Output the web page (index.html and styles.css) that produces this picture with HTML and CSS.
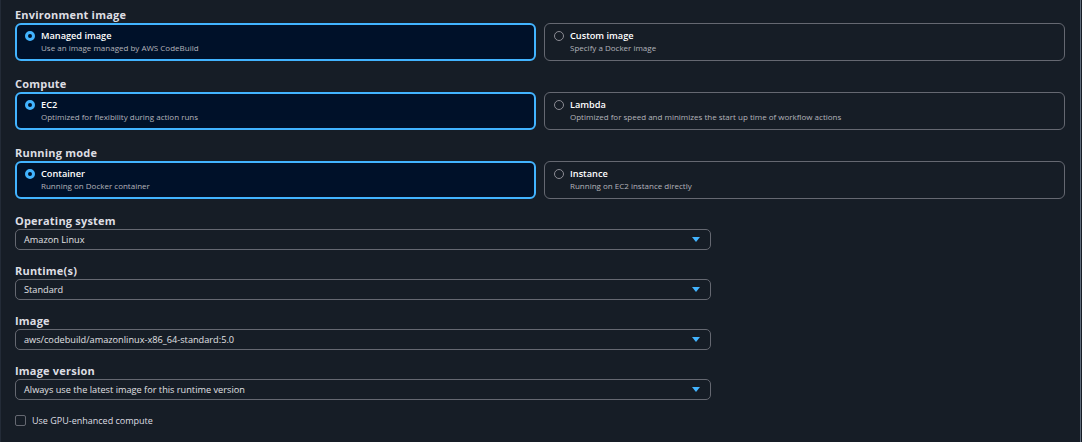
FILE: index.html
```html
<!DOCTYPE html>
<html lang="en">
<head>
    <meta charset="UTF-8">
    <title>Environment</title>
    <link rel="stylesheet" href="styles.css">
</head>
<body>
<div class="panel">

    <div class="group">
        <div class="label">Environment image</div>
        <div class="tiles">
            <div class="tile selected">
                <span class="radio"></span>
                <div>
                    <div class="tile-title">Managed image</div>
                    <div class="tile-desc">Use an image managed by AWS CodeBuild</div>
                </div>
            </div>
            <div class="tile">
                <span class="radio"></span>
                <div>
                    <div class="tile-title">Custom image</div>
                    <div class="tile-desc">Specify a Docker image</div>
                </div>
            </div>
        </div>
    </div>

    <div class="group">
        <div class="label">Compute</div>
        <div class="tiles">
            <div class="tile selected">
                <span class="radio"></span>
                <div>
                    <div class="tile-title">EC2</div>
                    <div class="tile-desc">Optimized for flexibility during action runs</div>
                </div>
            </div>
            <div class="tile">
                <span class="radio"></span>
                <div>
                    <div class="tile-title">Lambda</div>
                    <div class="tile-desc">Optimized for speed and minimizes the start up time of workflow actions</div>
                </div>
            </div>
        </div>
    </div>

    <div class="group">
        <div class="label">Running mode</div>
        <div class="tiles">
            <div class="tile selected">
                <span class="radio"></span>
                <div>
                    <div class="tile-title">Container</div>
                    <div class="tile-desc">Running on Docker container</div>
                </div>
            </div>
            <div class="tile">
                <span class="radio"></span>
                <div>
                    <div class="tile-title">Instance</div>
                    <div class="tile-desc">Running on EC2 instance directly</div>
                </div>
            </div>
        </div>
    </div>

    <div class="field">
        <div class="label">Operating system</div>
        <div class="select">Amazon Linux<span class="caret"></span></div>
    </div>

    <div class="field">
        <div class="label">Runtime(s)</div>
        <div class="select">Standard<span class="caret"></span></div>
    </div>

    <div class="field">
        <div class="label">Image</div>
        <div class="select">aws/codebuild/amazonlinux-x86_64-standard:5.0<span class="caret"></span></div>
    </div>

    <div class="field">
        <div class="label">Image version</div>
        <div class="select">Always use the latest image for this runtime version<span class="caret"></span></div>
    </div>

    <label class="check">
        <span class="box"></span>
        Use GPU-enhanced compute
    </label>

</div>
</body>
</html>
```

FILE: styles.css
```css
body {
    margin: 0;
    background-color: #161d26;
    font-family: "Open Sans", Arial, sans-serif;
    color: #dedee3;
}

.panel {
    width: 1081px;
    height: 442px;
    box-sizing: border-box;
    padding: 7px 15px 0 14px;
    border-left: 1px solid #232b37;
    border-right: 1px solid #5f6b7a;
}

.label {
    font-size: 11px;
    font-weight: 700;
    letter-spacing: 0.2px;
    line-height: 15px;
    height: 16px;
    color: #dedee3;
}

.field .label {
    height: 15px;
    line-height: 13px;
}

.group {
    margin-bottom: 15px;
}

.tiles {
    display: grid;
    grid-template-columns: 1fr 1fr;
    gap: 8px;
}

.tile {
    height: 38px;
    box-sizing: border-box;
    border: 1px solid #656871;
    border-radius: 6px;
    padding: 6px 9px;
    display: flex;
    align-items: flex-start;
    gap: 6px;
}

.tile.selected {
    border: 2px solid #42b4ff;
    background-color: #001129;
    padding: 5px 8px;
}

.radio {
    width: 10px;
    height: 10px;
    box-sizing: border-box;
    border: 1px solid #8c8c94;
    border-radius: 50%;
    margin-top: 1px;
    flex-shrink: 0;
}

.selected .radio {
    border: 3px solid #42b4ff;
    background-color: #001129;
}

.tile-title {
    font-size: 9.2px;
    font-weight: 600;
    line-height: 12px;
    color: #ffffff;
}

.tile-desc {
    font-size: 8px;
    line-height: 12px;
    color: #b4b4bb;
}

.field {
    margin-bottom: 14px;
}

.select {
    width: 696px;
    height: 21px;
    box-sizing: border-box;
    border: 1px solid #656871;
    border-radius: 5px;
    padding: 0 8px;
    font-size: 9.2px;
    line-height: 19px;
    color: #e0e0e4;
    position: relative;
}

.caret {
    position: absolute;
    right: 10px;
    top: 7px;
    width: 0;
    height: 0;
    border-left: 4px solid transparent;
    border-right: 4px solid transparent;
    border-top: 5px solid #42b4ff;
}

.check {
    display: flex;
    align-items: center;
    gap: 6px;
    font-size: 9px;
    color: #dedee3;
}

.box {
    width: 11px;
    height: 11px;
    box-sizing: border-box;
    border: 1px solid #656871;
    border-radius: 2px;
}
```
